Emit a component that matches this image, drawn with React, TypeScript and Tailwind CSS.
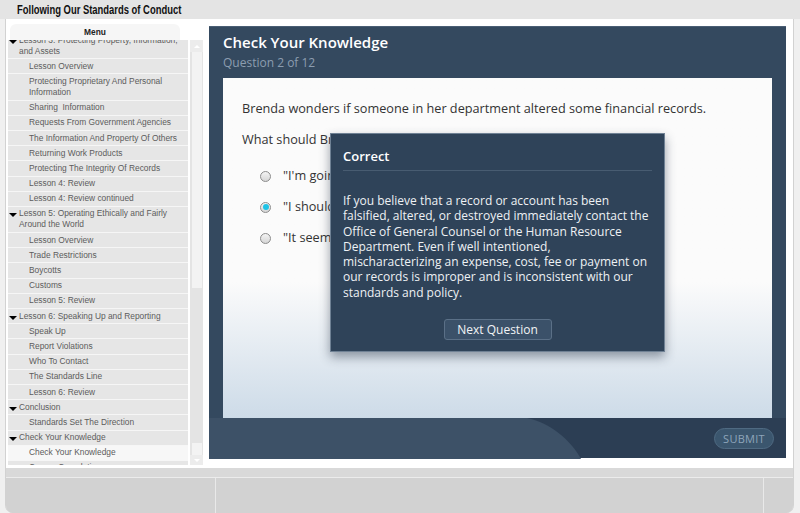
import React from 'react';

type MenuItem = { label: React.ReactNode; header?: boolean; selected?: boolean };

const menuItems: MenuItem[] = [
    { label: <>Lesson 3: Protecting Property, Information,<br />and Assets</>, header: true },
    { label: 'Lesson Overview' },
    { label: <>Protecting Proprietary And Personal<br />Information</> },
    { label: 'Sharing\u00a0 Information' },
    { label: 'Requests From Government Agencies' },
    { label: 'The Information And Property Of Others' },
    { label: 'Returning Work Products' },
    { label: 'Protecting The Integrity Of Records' },
    { label: 'Lesson 4: Review' },
    { label: 'Lesson 4: Review continued' },
    { label: <>Lesson 5: Operating Ethically and Fairly<br />Around the World</>, header: true },
    { label: 'Lesson Overview' },
    { label: 'Trade Restrictions' },
    { label: 'Boycotts' },
    { label: 'Customs' },
    { label: 'Lesson 5: Review' },
    { label: 'Lesson 6: Speaking Up and Reporting', header: true },
    { label: 'Speak Up' },
    { label: 'Report Violations' },
    { label: 'Who To Contact' },
    { label: 'The Standards Line' },
    { label: 'Lesson 6: Review' },
    { label: 'Conclusion', header: true },
    { label: 'Standards Set The Direction' },
    { label: 'Check Your Knowledge', header: true },
    { label: 'Check Your Knowledge', selected: true },
    { label: 'Course Completion' },
];

const options = [
    { text: '"I\'m going to ask the person directly."', checked: false },
    { text: '"I should report my concerns to my manager."', checked: true },
    { text: '"It seems like a minor issue, so I\'ll let it go."', checked: false },
];

const Radio = ({ checked }: { checked: boolean }) => (
    <span className="w-[11px] h-[11px] rounded-full border border-[#8c8c8c] bg-linear-to-b from-[#f4f4f4] to-[#d6d6d6] flex items-center justify-center shrink-0">
        {checked && <span className="w-[6px] h-[6px] rounded-full bg-[#1ec3e6]" />}
    </span>
);

const MenuRow = ({ item }: { item: MenuItem }) => (
    <div
        className={`flex items-start border-b border-[#f6f6f6] py-[1.6px] leading-[11px] ${item.selected ? 'bg-[#f7f7f7]' : 'bg-[#e6e6e6]'} ${item.header ? 'pl-[1px]' : 'pl-[21px]'}`}
    >
        {item.header && (
            <span className="mt-[5px] mr-[2px] w-0 h-0 border-x-[4px] border-t-[4px] border-x-transparent border-t-black shrink-0" />
        )}
        <span>{item.label}</span>
    </div>
);

const App: React.FC = () => {
    return (
        <div className="w-[800px] h-[513px] bg-[#f0f0f0] flex flex-col overflow-hidden">
            {/* Title bar */}
            <div className="h-[19px] bg-[#e4e4e4] flex items-center pl-[17px] shrink-0">
                <span
                    className="inline-block origin-left scale-x-[0.785] text-[12px] font-bold text-[#111] leading-none"
                    style={{ fontFamily: '"Liberation Sans", Arial, sans-serif' }}
                >
                    Following Our Standards of Conduct
                </span>
            </div>

            {/* Frame */}
            <div className="ml-[5px] w-[789px] flex-1 flex flex-col border-x border-[#d2d2d2] rounded-b-[8px] overflow-hidden">
                <div className="h-[449px] bg-white flex shrink-0">
                    {/* Menu column */}
                    <div
                        className="w-[199px] flex flex-col text-[8.4px] text-[#5c5c5c]"
                        style={{ fontFamily: '"Liberation Sans", Arial, sans-serif' }}
                    >
                        <div className="mt-[5px] ml-[4px] w-[170px] h-[16px] rounded-t-[6px] bg-[#f6f6f6] flex items-center justify-center font-bold text-[#222] text-[8.4px] pt-[1px] relative z-10">
                            Menu
                        </div>
                        <div className="h-[425px] flex">
                            <div className="ml-[2px] w-[180px] overflow-hidden">
                                <div className="-mt-[7px]">
                                    {menuItems.map((item, i) => (
                                        <MenuRow key={i} item={item} />
                                    ))}
                                </div>
                            </div>
                            {/* scrollbar */}
                            <div className="ml-[2px] w-[13px] bg-[#e4e4e4] flex flex-col items-center">
                                <div className="w-full h-[12px] flex items-center justify-center bg-[#ececec]">
                                    <span className="w-0 h-0 border-x-[3px] border-b-[3px] border-x-transparent border-b-white" />
                                </div>
                                <div className="mx-auto w-[10px] h-[236px] bg-[#f3f3f3]" />
                                <div className="flex-1" />
                                <div className="w-[10px] h-[12px] bg-[#f3f3f3]" />
                                <div className="w-full h-[10px] flex items-center justify-center bg-[#ececec]">
                                    <span className="w-0 h-0 border-x-[3px] border-t-[3px] border-x-transparent border-t-white" />
                                </div>
                            </div>
                        </div>
                    </div>

                    {/* Content panel */}
                    <div
                        className="ml-[4px] mt-[7px] w-[577px] h-[432px] bg-[#34495f] flex flex-col border-t border-[#4a5e74]"
                        style={{ fontFamily: '"Open Sans", "Noto Sans", sans-serif' }}
                    >
                        <div className="px-[14px] pt-[5px] h-[51px] shrink-0">
                            <div className="text-[15px] font-semibold text-white leading-[20px]">Check Your Knowledge</div>
                            <div className="text-[12px] text-[#8c9db0] leading-[16px] mt-[3px]">Question 2 of 12</div>
                        </div>

                        <div className="mx-[14px] h-[340px] relative bg-linear-to-b from-[#fbfbfb] from-60% to-[#cddbe8] text-[#333]">
                            <div className="pl-[19px] pt-[21px]">
                                <p className="text-[12.7px] leading-[18px]">
                                    Brenda wonders if someone in her department altered some financial records.
                                </p>
                                <p className="text-[12.7px] leading-[18px] mt-[13px]">What should Brenda do?</p>
                                <div className="mt-[19px] pl-[18px] flex flex-col gap-[13px]">
                                    {options.map((o, i) => (
                                        <div key={i} className="flex items-center gap-[12px] h-[18px] text-[12.7px]">
                                            <Radio checked={o.checked} />
                                            <span>{o.text}</span>
                                        </div>
                                    ))}
                                </div>
                            </div>

                            {/* Feedback popup */}
                            <div className="absolute left-[107px] top-[55px] w-[335px] h-[219px] bg-[#2f4359] border border-[#6f8194] shadow-[0_5px_10px_rgba(30,45,65,0.45)] px-[12px] flex flex-col">
                                <div className="pt-[13px] pb-[5px] text-[13px] font-semibold text-white leading-[18px]">Correct</div>
                                <div className="h-px bg-[#485c71]" />
                                <p className="mt-[22px] text-[12px] leading-[15.3px] text-[#eef1f4]">
                                    If you believe that a record or account has been<br />
                                    falsified, altered, or destroyed immediately contact the<br />
                                    Office of General Counsel or the Human Resource<br />
                                    Department. Even if well intentioned,<br />
                                    mischaracterizing an expense, cost, fee or payment on<br />
                                    our records is improper and is inconsistent with our<br />
                                    standards and policy.
                                </p>
                                <div className="flex-1" />
                                <div className="flex justify-center pb-[11px]">
                                    <button className="w-[108px] h-[21px] bg-[#3b5169] border border-[#5b7087] rounded-[3px] text-[12px] text-[#f2f4f6] leading-none">
                                        Next Question
                                    </button>
                                </div>
                            </div>
                        </div>

                        {/* Footer */}
                        <div className="flex-1 bg-[#2c3e54] relative flex items-center justify-end pr-[12px]">
                            <svg className="absolute left-0 top-0" width="380" height="41" viewBox="0 0 380 41">
                                <path d="M0 0 H318 C340 4 362 22 372 41 H0 Z" fill="#3d5167" />
                            </svg>
                            <button className="relative w-[60px] h-[21px] rounded-full bg-[#3b566e] border border-[#4f6a82] text-[11px] text-[#8ea5ba] tracking-wide leading-none">
                                SUBMIT
                            </button>
                        </div>
                    </div>
                </div>

                {/* Bottom bar */}
                <div className="flex-1 bg-[#d9d9d9] flex flex-col">
                    <div className="h-[10px] border-b border-[#ececec]" />
                    <div className="flex-1 bg-[#d2d2d2] flex">
                        <div className="w-[210px] border-r border-[#e9e9e9]" />
                        <div className="w-[548px] border-r border-[#e9e9e9]" />
                        <div className="flex-1" />
                    </div>
                </div>
            </div>
        </div>
    );
};

export default App;
